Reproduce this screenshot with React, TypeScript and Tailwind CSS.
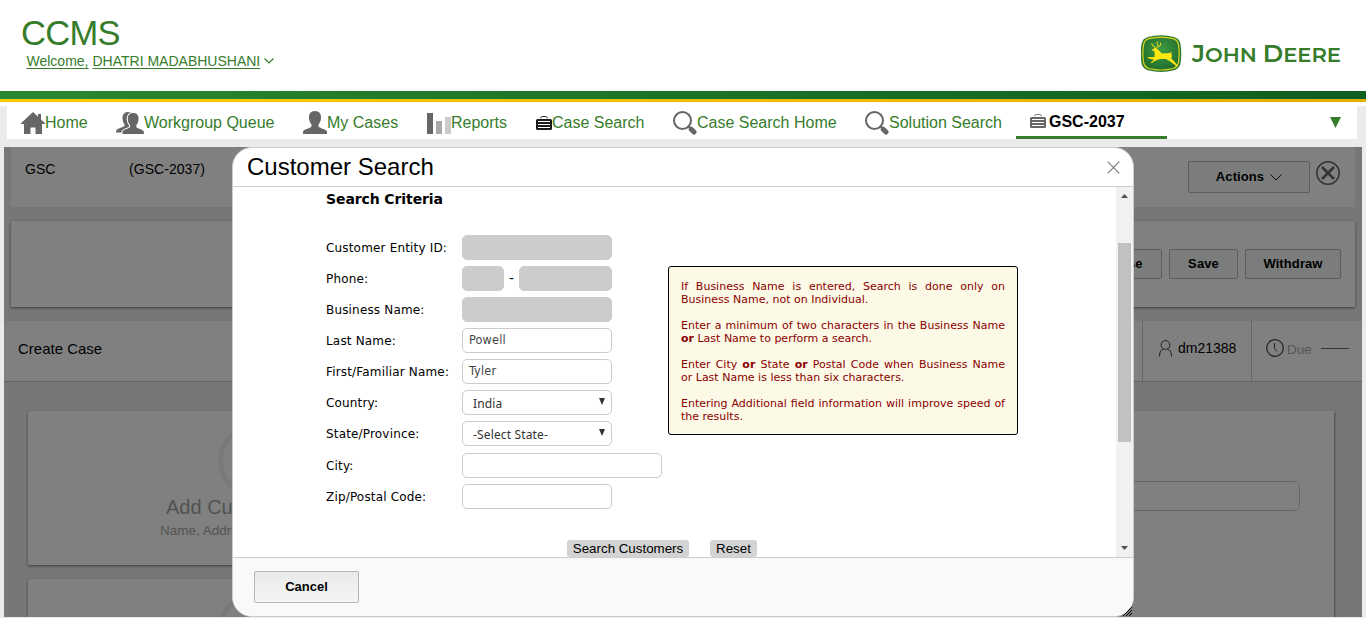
import type { ReactNode } from "react";

const arial = "font-['Liberation_Sans',Arial,sans-serif]";
const verdana = "font-['DejaVu_Sans',Verdana,sans-serif]";

function DeereLogo() {
  return (
    <svg width="200" height="40" viewBox="0 0 200 40" className="block">
      <defs>
        <radialGradient id="shield" cx="50%" cy="40%" r="65%">
          <stop offset="0" stopColor="#3f9b45" />
          <stop offset="1" stopColor="#1f6b2b" />
        </radialGradient>
      </defs>
      <g transform="translate(-1 -1)">
        <path d="M8 2.6Q21 -.8 34 2.6Q39 4 40.300 9Q42.300 20 40.300 30Q39 34.500 34 36Q21 39.400 8 36Q3 34.500 1.700 30Q-.3 20 1.700 9Q3 4 8 2.600Z" fill="#2d7a35" transform="translate(0 .3)" />
        <path d="M9 4.600Q21 1.500 33 4.600Q37.200 5.800 38.300 10Q40 20 38.300 29Q37.200 33 33 34.500Q21 37.500 9 34.500Q4.800 33 3.700 29Q2 20 3.700 10Q4.800 5.800 9 4.600Z" fill="url(#shield)" stroke="#d9d41f" strokeWidth="1.200" />
        <path d="M11.800 15.800L15 14L17 14.600L19.500 17.300L22 19.600L30 19L31.500 17.400L31.300 20L32 22L31.200 24.500L34 27L38 32L37 32.500L29.500 27L26 24.900L21 25L18 25.500L15 27L11.300 29.300L11 28.600L14 25.800L9 24.600L7.500 24L7.800 23.200L14.500 23L14.800 18.500L13.500 16.600L11.900 16.600Z" fill="#ffe712" />
        <path d="M15.500 14.500L13.500 11.500M14.200 12.300L11.800 10.800L12.200 9.200M16 14.300L18 12.800L20.300 11.800L20.500 8.800M18.300 12.400L17.200 9.600L17.300 7.600" fill="none" stroke="#ffe712" strokeWidth=".9" />
      </g>
      <text x="51" y="27" fontFamily="Montserrat, Inter, sans-serif" fontWeight="650" fontSize="20" fill="#367c2b" textLength="149" lengthAdjust="spacingAndGlyphs">
        <tspan fontSize="23.500">J</tspan>OHN <tspan fontSize="23.500">D</tspan>EERE
      </text>
    </svg>
  );
}

function HomeIcon() {
  return (
    <svg width="24" height="22" viewBox="0 0 24 22"><path d="M12 0L17 4.700V2H20V7.500L24 11.300V12H21V22H14.500V15.500H9.500V22H3V12H0V11.300Z" fill="#666" /></svg>
  );
}

const personPath = "M12 0C16.500 0 18.300 3 18 7C17.900 10 16.700 12 15.500 13.500V15.500C17 17.500 24 18.200 24 21V23H0V21C0 18.200 7 17.500 8.500 15.500V13.500C7.300 12 6.100 10 6 7C5.700 3 7.500 0 12 0Z";

function PersonIcon() {
  return <svg width="24" height="23" viewBox="0 0 24 23" className="mb-px"><path d={personPath} fill="#666" /></svg>;
}

function GroupIcon() {
  return (
    <svg width="28" height="22" viewBox="0 0 28 22">
      <path d="M12 0C8.500 0 6.300 2.500 6.500 6.500C6.600 9 7.500 11 8.500 12.300V14C7 15.500 0 16.500 0 19.500V20.500H9L18 12V3C17 1 15 0 12 0Z" fill="#666" />
      <path d={personPath} transform="translate(6.500 1) scale(.89 .91)" fill="#666" stroke="#fff" strokeWidth="2.400" />
      <path d={personPath} transform="translate(6.500 1) scale(.89 .91)" fill="#666" />
    </svg>
  );
}

function BarsIcon() {
  return (
    <svg width="24" height="21" viewBox="0 0 24 21" className="mt-px"><path d="M0 0H6V21H0Z" fill="#666" /><path d="M9 8H15V21H9Z" fill="#aaa" /><path d="M18 4H24V21H18Z" fill="#ccc" /></svg>
  );
}

function CaseIcon({ color }: { color: string }) {
  return (
    <svg width="16" height="14" viewBox="0 0 16 14">
      <path d="M4.500 2.200Q5 .5 6.500 .5H9.500Q11 .5 11.500 2.200" fill="none" stroke={color} />
      <path d="M1.500 3H14.500Q16 3 16 4.500V5H0V4.500Q0 3 1.500 3ZM0 5H2V12H0ZM14 5H16V12H14ZM2 6H14V8H2ZM2 9H14V11H2ZM0 12H16V12.500Q16 14 14.500 14H1.500Q0 14 0 12.500Z" fill={color} />
    </svg>
  );
}

function LensIcon() {
  return (
    <svg width="24" height="24" viewBox="0 0 24 24">
      <circle cx="9.500" cy="9.500" r="8.500" fill="none" stroke="#666" strokeWidth="2" />
      <path d="M15.500 15.500L18 18" stroke="#666" strokeWidth="2" />
      <path d="M18.200 18.200L21 21" stroke="#666" strokeWidth="5" strokeLinecap="round" />
    </svg>
  );
}

function NavItem({ icon, label, place }: { icon: ReactNode; label: string; place: string }) {
  return (
    <div className={`flex shrink-0 items-center pt-px whitespace-nowrap ${place}`}>
      {icon}
      <span>{label}</span>
    </div>
  );
}

function GrayButton({ label, size, children }: { label: string; size: string; children?: ReactNode }) {
  return (
    <button className={`flex shrink-0 items-center justify-center rounded-[2px] border border-[#5d5d5d] bg-[#7b7d7c] text-[13px] font-bold tracking-[0.1px] text-black ${size}`}>
      {label}
      {children}
    </button>
  );
}

function Row({ label, children, gap = "mb-1.5" }: { label: string; children: ReactNode; gap?: string }) {
  return (
    <div className={`flex h-[25px] items-center ${gap}`}>
      <label className="w-[136px] shrink-0 whitespace-nowrap text-[12px] tracking-[0.17px]">{label}</label>
      {children}
    </div>
  );
}

function Field({ width, value = "", off = false }: { width: string; value?: string; off?: boolean }) {
  return (
    <div className={`flex h-[25px] items-center rounded-[5px] border border-[#ccc] px-1.5 font-['DejaVu_Sans_Condensed','DejaVu_Sans',sans-serif] text-[12.5px] tracking-[0.2px] text-[#444] ${width} ${off ? "bg-[#ccc]" : "bg-white"}`}>
      {value}
    </div>
  );
}

function Select({ value }: { value: string }) {
  return (
    <div className="flex h-[25px] w-[150px] items-center justify-between rounded-[5px] border border-[#ccc] bg-white pr-1.5 pl-2.5 font-['Noto_Sans',sans-serif] text-[12px] tracking-[0.15px] text-[#333]">
      <span className="relative top-px">{value}</span>
      <svg width="6" height="7" viewBox="0 0 6 7" className="-mt-0.5"><path d="M0 0H6L3 7Z" fill="#333" /></svg>
    </div>
  );
}

function Ring() {
  return <svg width="74" height="74" viewBox="0 0 74 74" className="ml-[190px] block"><circle cx="37" cy="37" r="34.500" fill="none" stroke="#797979" strokeWidth="5" /></svg>;
}

function CasePage() {
  return (
    <div className="flex h-full flex-col bg-[#777]">
      <div className="mx-[7px] flex h-[60px] shrink-0 bg-[#808080] px-3.5 text-sm">
        <span className="mt-3 w-[104px]">GSC</span>
        <span className="mt-3 flex-1 tracking-[0.05px]">(GSC-2037)</span>
        <div className="mt-3.5">
          <GrayButton label="Actions" size="h-8 w-[122px]">
            <svg width="12" height="7" viewBox="0 0 12 7" className="ml-1.5"><path d="M.5 .5L6 6L11.500 .5" fill="none" stroke="#111" /></svg>
          </GrayButton>
        </div>
        <svg width="24" height="24" viewBox="0 0 24 24" className="mt-3.5 mr-[1px] ml-1.5">
          <circle cx="12" cy="12" r="11.200" fill="none" stroke="#333" strokeWidth="1.500" />
          <path d="M6 6L18 18M18 6L6 18" stroke="#333" strokeWidth="2.500" />
        </svg>
      </div>
      <div className="mx-[7px] mt-3.5 flex h-[86px] shrink-0 items-center justify-end gap-[7px] rounded-[1px] bg-[#808080] pr-3.5 shadow-[0_1px_3px_rgba(0,0,0,0.5)]">
        <GrayButton label="Close Case" size="w-[110px] h-[30px]" />
        <GrayButton label="Save" size="w-[69px] h-[30px]" />
        <GrayButton label="Withdraw" size="w-24 h-[30px]" />
      </div>
      <div className="mt-3.5 flex h-[61px] shrink-0 border-b border-[#666] bg-[#808080]">
        <div className="flex-1 pt-[18px] pl-3.5 text-[15px] leading-5">Create Case</div>
        <div className="flex w-[109px] items-center border-l border-[#666] pb-1.5 pl-4 text-sm">
          <svg width="13" height="17" viewBox="0 0 13 17" className="mr-1.5"><circle cx="6.500" cy="5" r="4.400" fill="none" stroke="#222" /><path d="M.6 16.500V14Q.6 10.500 4.500 9M12.400 16.500V14Q12.400 10.500 8.500 9" fill="none" stroke="#222" /></svg>
          dm21388
        </div>
        <div className="flex w-[111px] items-center border-l border-[#666] pb-1.5 pl-3.5 text-[13.500px] text-[#555]">
          <svg width="18" height="18" viewBox="0 0 18 18" className="mr-[3px]"><circle cx="9" cy="9" r="8.300" fill="none" stroke="#222" strokeWidth="1.200" /><path d="M8.500 4V9.500L11 12.500" fill="none" stroke="#222" /></svg>
          <span className="mt-1">Due</span>
          <span className="mt-px ml-[9px] h-px w-7 bg-[#333]" />
        </div>
      </div>
      <div className="flex min-h-0 flex-1 gap-3.5 px-6 pt-[29px] pr-7">
        <div className="flex w-[454px] flex-col gap-3.5">
          <div className="h-[154px] shrink-0 rounded-[1px] bg-[#808080] pt-[13px] whitespace-nowrap text-[#525252] shadow-[0_1px_3px_rgba(0,0,0,0.5)]">
            <Ring />
            <div className="-mt-[3px] pl-[138px] text-[20px] leading-6">Add Customer</div>
            <div className="mt-0.5 pl-[132px] text-[13.500px] leading-5">Name, Address</div>
          </div>
          <div className="h-[154px] shrink-0 rounded-[1px] bg-[#808080] pt-[13px] shadow-[0_1px_3px_rgba(0,0,0,0.5)]"><Ring /></div>
        </div>
        <div className="h-[260px] flex-1 bg-[#808080] pt-[70px] pr-[34px] pl-8 shadow-[1px_1px_2px_rgba(0,0,0,0.35)]">
          <div className="h-[30px] rounded-[5px] border border-[#666]" />
        </div>
      </div>
    </div>
  );
}

function SearchDialog() {
  return (
    <div className={`absolute top-0 left-[228px] flex h-[470px] w-[902px] flex-col overflow-hidden rounded-[20px] border border-[#ccc] bg-white text-black ${verdana}`}>
      <div className={`flex h-[39px] shrink-0 items-center justify-between border-b border-[#ccc] pr-[13px] pl-3.5 ${arial}`}>
        <span className="text-[24px]">Customer Search</span>
        <svg width="13" height="13" viewBox="0 0 13 13"><path d="M.7 .7L12.300 12.300M12.300 .7L.7 12.300" stroke="#777" strokeWidth="1.100" /></svg>
      </div>
      <div className="flex h-[370px] shrink-0">
        <div className="flex flex-1 flex-col pl-[93px]">
          <h2 className="mt-[3px] h-[45px] text-[14px] leading-[18px] font-bold tracking-[-0.1px]">Search Criteria</h2>
          <div className="flex">
            <div className="w-[342px]">
              <Row label="Customer Entity ID:"><Field width="w-[150px]" off /></Row>
              <Row label="Phone:">
                <Field width="w-[42px]" off />
                <span className="w-[15px] text-center text-[14px]">-</span>
                <Field width="w-[93px]" off />
              </Row>
              <Row label="Business Name:"><Field width="w-[150px]" off /></Row>
              <Row label="Last Name:"><Field width="w-[150px]" value="Powell" /></Row>
              <Row label="First/Familiar Name:"><Field width="w-[150px]" value="Tyler" /></Row>
              <Row label="Country:"><Select value="India" /></Row>
              <Row label="State/Province:" gap="mb-[7px]"><Select value="-Select State-" /></Row>
              <Row label="City:"><Field width="w-[200px]" /></Row>
              <Row label="Zip/Postal Code:" gap=""><Field width="w-[150px]" /></Row>
            </div>
            <div className="mt-[31px] h-[169px] w-[350px] space-y-[13px] rounded-[3px] border border-black bg-[#fcf9e6] px-3 pt-[13px] text-justify text-[11px] leading-[13px] text-[#8b0000]">
              <p>If Business Name is entered, Search is done only on Business Name, not on Individual.</p>
              <p>Enter a minimum of two characters in the Business Name <b>or</b> Last Name to perform a search.</p>
              <p>Enter City <b>or</b> State <b>or</b> Postal Code when Business Name or Last Name is less than six characters.</p>
              <p>Entering Additional field information will improve speed of the results.</p>
            </div>
          </div>
          <div className={`mt-[31px] ml-[241px] flex gap-[21px] text-[13.333px] leading-[17px] ${arial}`}>
            <button className="h-[17px] w-[122px] rounded-[3px] bg-[#d3d3d3]">Search Customers</button>
            <button className="h-[17px] w-[47px] rounded-[3px] bg-[#d3d3d3]">Reset</button>
          </div>
        </div>
        <div className="flex w-[17px] flex-col items-center bg-[#f1f1f1]">
          <svg width="7" height="4" viewBox="0 0 7 4" className="mt-[7px] shrink-0"><path d="M0 4L3.500 0L7 4Z" fill="#505050" /></svg>
          <div className="mt-[45px] h-[199px] w-[13px] shrink-0 bg-[#c1c1c1]" />
          <svg width="7" height="4" viewBox="0 0 7 4" className="mt-auto mb-[7px] shrink-0"><path d="M0 0L3.500 4L7 0Z" fill="#505050" /></svg>
        </div>
      </div>
      <div className={`flex flex-1 border-t border-[#ccc] bg-[#f9f9f9] pt-[13px] pl-[21px] ${arial}`}>
        <button className="h-8 w-[105px] rounded-[2px] border border-[#b5b5b5] bg-linear-to-b from-[#e9ebea] to-[#f4f6f5] text-[13px] font-bold">Cancel</button>
      </div>
    </div>
  );
}

export default function App() {
  return (
    <div className={`h-[618px] w-[1366px] overflow-hidden bg-[#ebebeb] ${arial}`}>
      <header className="flex h-[91px] justify-between bg-white pr-[25px] pl-[21px] text-[#367c2b]">
        <div>
          <h1 className="mt-[15px] text-[34.500px] leading-[36px] tracking-[-0.7px]">CCMS</h1>
          <div className="ml-[5.500px] flex items-center text-[14px] leading-5">
            <span className="underline underline-offset-2">Welcome,</span>
            <span className="ml-1 underline underline-offset-2">DHATRI MADABHUSHANI</span>
            <svg width="10" height="6" viewBox="0 0 10 6" className="ml-1"><path d="M.5 .5L5 5L9.500 .5" fill="none" stroke="#367c2b" strokeWidth="1.200" /></svg>
          </div>
        </div>
        <div className="pt-[35px]"><DeereLogo /></div>
      </header>
      <div className="h-2 bg-linear-to-r from-[#28882f] to-[#0f5f20]" />
      <div className="h-[3px] bg-linear-to-r from-[#f8cd00] to-[#e4ae00]" />
      <div className="h-1 bg-white" />
      <nav className="mr-[9px] ml-[7px] flex h-[33px] bg-white text-[16px] text-[#367c2b]">
        <NavItem icon={<HomeIcon />} label="Home" place="ml-3.5 w-[95px]" />
        <NavItem icon={<GroupIcon />} label="Workgroup Queue" place="w-[187px]" />
        <NavItem icon={<PersonIcon />} label="My Cases" place="w-[124px]" />
        <NavItem icon={<BarsIcon />} label="Reports" place="w-[109px]" />
        <NavItem icon={<CaseIcon color="#1a1a1a" />} label="Case Search" place="w-[137px]" />
        <NavItem icon={<LensIcon />} label="Case Search Home" place="w-48" />
        <NavItem icon={<LensIcon />} label="Solution Search" place="w-[151px]" />
        <div className="flex w-[151px] items-center border-b-[3px] border-[#367c2b] pl-3.5">
          <CaseIcon color="#666" />
          <span className="mt-0.5 ml-[3px] font-bold text-black">GSC-2037</span>
        </div>
        <svg width="11" height="11" viewBox="0 0 11 11" className="mt-[11px] mr-[16px] ml-auto"><path d="M0 0H11L5.500 11Z" fill="#367c2b" /></svg>
      </nav>
      <main className="relative mx-1 mt-2 h-[470px]">
        <div className="h-full overflow-hidden"><CasePage /></div>
        <SearchDialog />
        <svg width="9" height="9" viewBox="0 0 9 9" className="absolute right-[230px] bottom-[1px]"><path d="M0 9L9 0M3 9L9 3M6 9L9 6" stroke="#000" /></svg>
      </main>
    </div>
  );
}
